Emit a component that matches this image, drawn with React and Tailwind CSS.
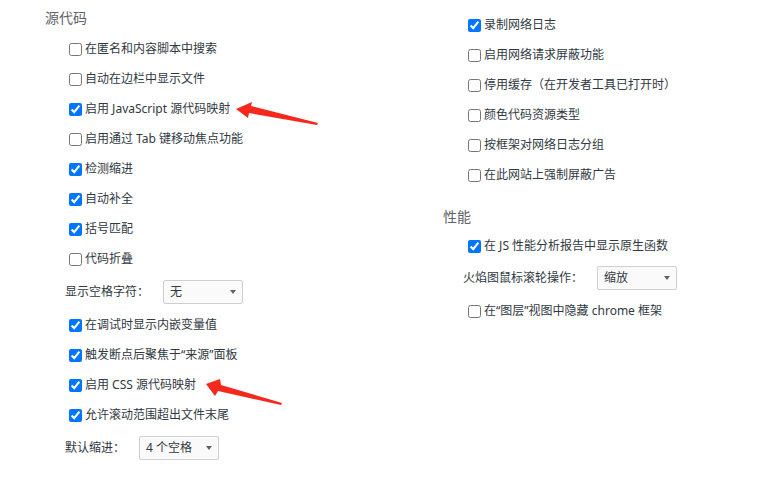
import React from 'react';

const font = { fontFamily: '"Noto Sans", "Noto Sans CJK SC", sans-serif' };

function Check({ label, checked, h = 'h-[30px]' }) {
  return (
    <label className={`flex items-center gap-[3px] ${h}`}>
      <input type="checkbox" readOnly checked={checked} className="m-0 w-[13px] h-[13px] accent-[#0075ff]" />
      <span className="text-[12px] text-[#303942] whitespace-nowrap">{label}</span>
    </label>
  );
}

function Select({ label, value }) {
  return (
    <div className="flex items-center h-[36px] gap-[14px]">
      <span className="text-[12px] text-[#303942] whitespace-nowrap">{label}</span>
      <div className="flex items-center justify-between w-[80px] h-[24px] border border-[#cfcfcf] rounded-[2px] bg-[#fafafa] pl-[6px] pr-[6px]">
        <span className="text-[12px] text-[#303942]">{value}</span>
        <span className="w-0 h-0 border-l-[3px] border-r-[3px] border-t-[4px] border-l-transparent border-r-transparent border-t-[#5f6368]"></span>
      </div>
    </div>
  );
}

function Heading({ children, className }) {
  return (
    <div className={`flex items-center text-[14px] text-[#5f6368] ${className}`}>{children}</div>
  );
}

export default function App() {
  return (
    <div className="relative w-[776px] h-[495px] bg-white overflow-hidden" style={font}>
      <div className="flex">
        {/* 左栏 */}
        <div className="w-[443px] pl-[45px]">
          <Heading className="h-[34px]">源代码</Heading>
          <div className="pl-[24px]">
            <Check label="在匿名和内容脚本中搜索" />
            <Check label="自动在边栏中显示文件" />
            <Check label="启用 JavaScript 源代码映射" checked />
            <Check label="启用通过 Tab 键移动焦点功能" />
            <Check label="检测缩进" checked />
            <Check label="自动补全" checked />
            <Check label="括号匹配" checked />
            <Check label="代码折叠" />
          </div>
          <div className="pl-[20px]">
            <Select label="显示空格字符：" value="无" />
          </div>
          <div className="pl-[24px]">
            <Check label="在调试时显示内嵌变量值" checked />
            <Check label="触发断点后聚焦于“来源”面板" checked />
            <Check label="启用 CSS 源代码映射" checked />
            <Check label="允许滚动范围超出文件末尾" checked />
          </div>
          <div className="pl-[20px]">
            <Select label="默认缩进：" value="4 个空格" />
          </div>
        </div>

        {/* 右栏 */}
        <div className="pt-[10px]">
          <div className="pl-[25px]">
            <Check label="录制网络日志" checked />
            <Check label="启用网络请求屏蔽功能" />
            <Check label="停用缓存（在开发者工具已打开时）" />
            <Check label="颜色代码资源类型" />
            <Check label="按框架对网络日志分组" />
            <Check label="在此网站上强制屏蔽广告" />
          </div>
          <Heading className="mt-[10px] h-[32px]">性能</Heading>
          <div className="pl-[25px]">
            <Check label="在 JS 性能分析报告中显示原生函数" checked h="h-[28px]" />
          </div>
          <div className="pl-[20px]">
            <Select label="火焰图鼠标滚轮操作：" value="缩放" />
          </div>
          <div className="pl-[25px]">
            <Check label="在“图层”视图中隐藏 chrome 框架" />
          </div>
        </div>
      </div>

      {/* 红色标注箭头 */}
      <svg className="absolute inset-0 pointer-events-none" width="776" height="495" viewBox="0 0 776 495">
        <polygon fill="#f5281c" points="236,109 252,102 251,106 318,123 317,125 249,113 248,118" />
        <polygon fill="#f5281c" points="206,384 220,379 221,385 282,403 281,405 218,391 215,396" />
      </svg>
    </div>
  );
}
